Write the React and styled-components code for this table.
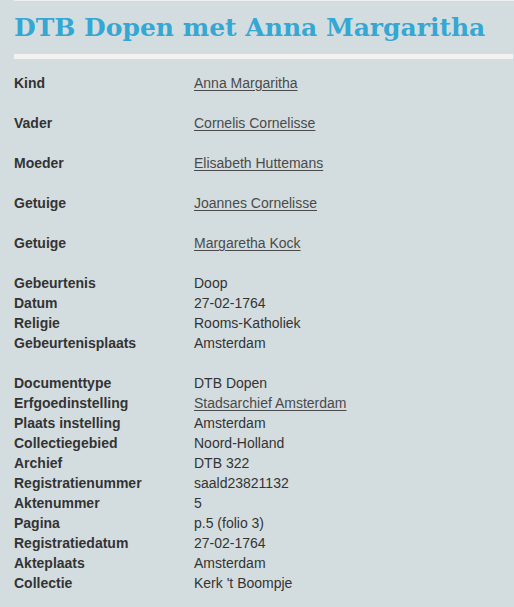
import React from 'react'
import styled, { createGlobalStyle } from 'styled-components'

const GlobalStyle = createGlobalStyle`
    body {
        margin: 0;
        background: #d3dde0;
        font-family: "Liberation Sans", Arial, sans-serif;
    }
`;

const Page = styled.main`
    margin-left: 14px;
    border-top: 1px solid #eef0ef;
    padding-bottom: 14px;
`;

const Title = styled.h1`
    margin: 0;
    padding-top: 11px;
    height: 42px;
    font-family: "DejaVu Serif", serif;
    font-weight: bold;
    font-size: 25px;
    line-height: 32px;
    color: #35a7d3;
    white-space: nowrap;
`;

const Rule = styled.hr`
    margin: 0 1px 14px 0;
    border: 0;
    height: 5px;
    background: #f2f2f0;
`;

const Group = styled.dl`
    margin: 0 0 20px 0;
    display: grid;
    grid-template-columns: 180px 1fr;
    row-gap: ${p => (p.$spaced ? '20px' : '0')};
    font-size: 14px;
    line-height: 20px;
    color: #333;
`;

const Label = styled.dt`
    font-weight: bold;
`;

const Value = styled.dd`
    margin: 0;
    a {
        color: #4a4a4a;
        text-decoration: underline;
        text-underline-offset: 2px;
    }
`;

const groups = [
    {
        spaced: true,
        rows: [
            ['Kind', 'Anna Margaritha', true],
            ['Vader', 'Cornelis Cornelisse', true],
            ['Moeder', 'Elisabeth Huttemans', true],
            ['Getuige', 'Joannes Cornelisse', true],
            ['Getuige', 'Margaretha Kock', true],
        ]
    },
    {
        rows: [
            ['Gebeurtenis', 'Doop'],
            ['Datum', '27-02-1764'],
            ['Religie', 'Rooms-Katholiek'],
            ['Gebeurtenisplaats', 'Amsterdam'],
        ]
    },
    {
        rows: [
            ['Documenttype', 'DTB Dopen'],
            ['Erfgoedinstelling', 'Stadsarchief Amsterdam', true],
            ['Plaats instelling', 'Amsterdam'],
            ['Collectiegebied', 'Noord-Holland'],
            ['Archief', 'DTB 322'],
            ['Registratienummer', 'saald23821132'],
            ['Aktenummer', '5'],
            ['Pagina', 'p.5 (folio 3)'],
            ['Registratiedatum', '27-02-1764'],
            ['Akteplaats', 'Amsterdam'],
            ['Collectie', "Kerk 't Boompje"],
        ]
    }
]

const App = () => {
    return (
        <Page>
            <GlobalStyle />
            <Title>DTB Dopen met Anna Margaritha</Title>
            <Rule />
            {groups.map((group, i) => (
                <Group key={i} $spaced={group.spaced}>
                    {group.rows.map(([label, value, link], j) => (
                        <React.Fragment key={j}>
                            <Label>{label}</Label>
                            <Value>{link ? <a href="#">{value}</a> : value}</Value>
                        </React.Fragment>
                    ))}
                </Group>
            ))}
        </Page>
    )
}

export default App;
